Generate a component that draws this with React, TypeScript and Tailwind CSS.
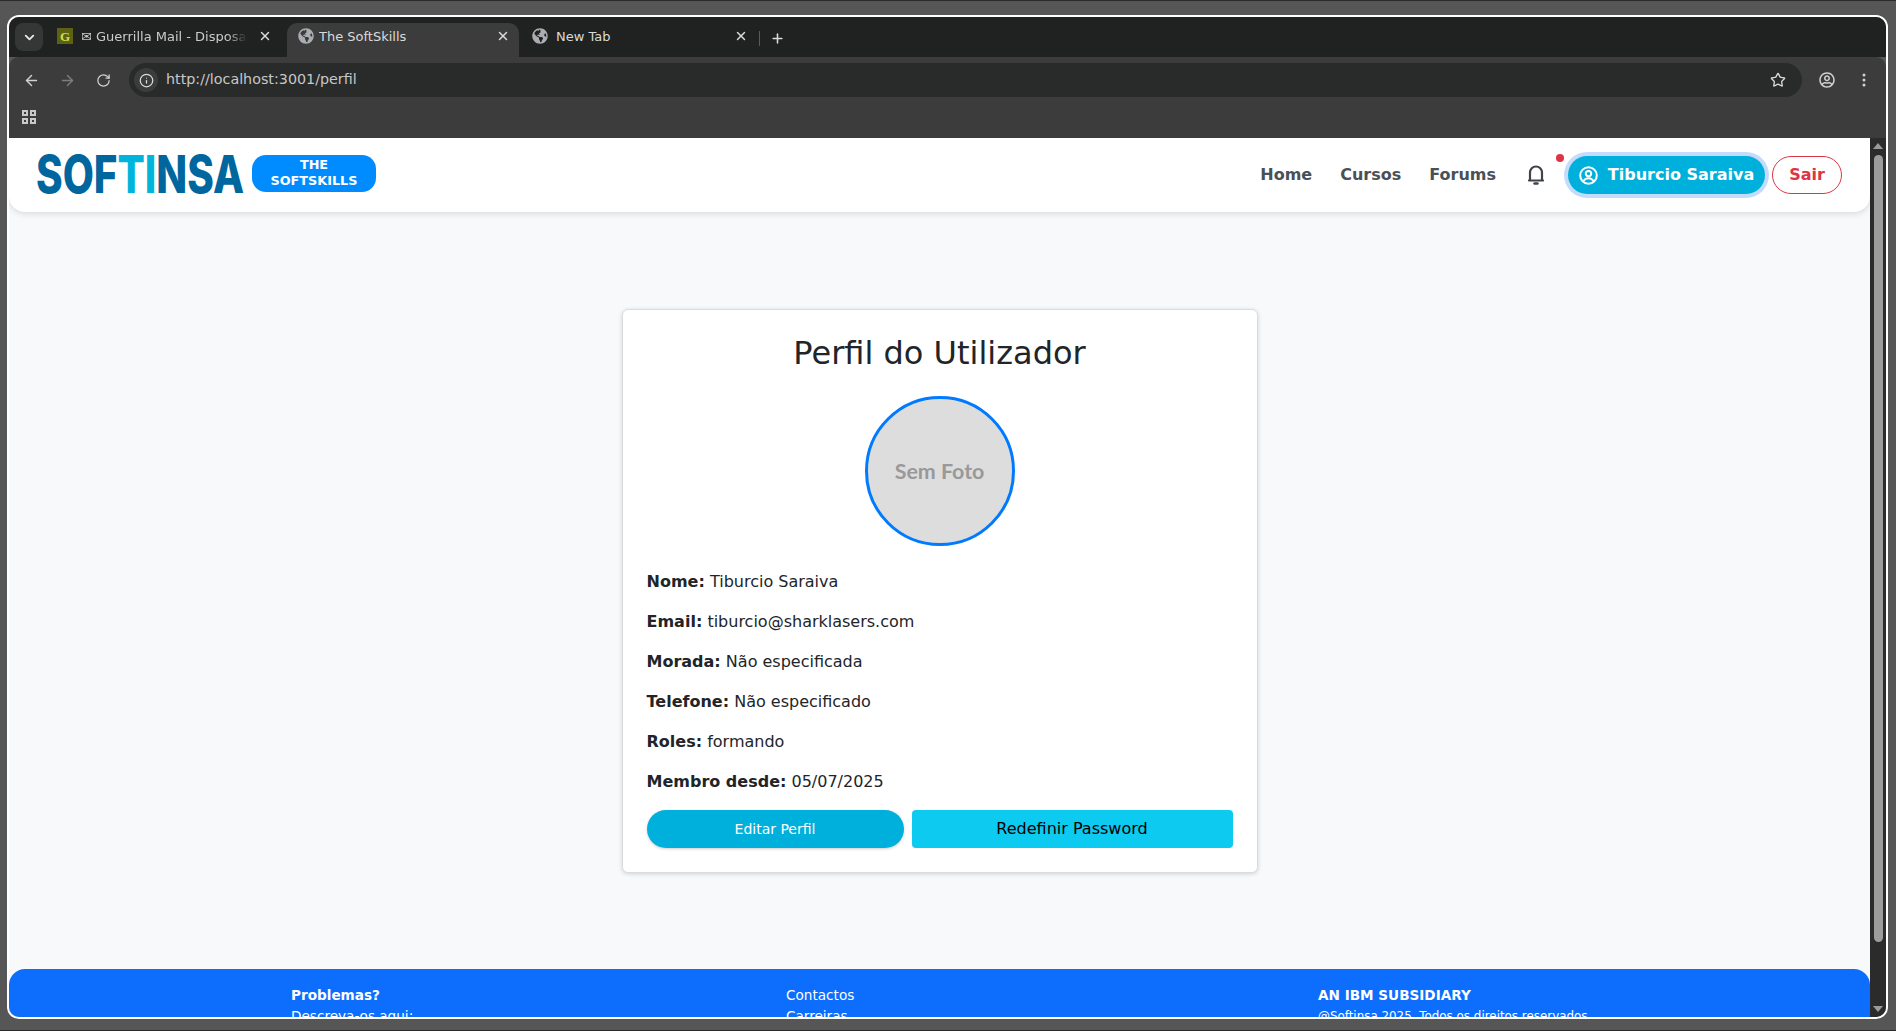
import { ArrowLeft, ArrowRight, ChevronDown, Info, Plus, RotateCw, Star, X } from "lucide-react";
import { BsThreeDotsVertical } from "react-icons/bs";
import { FaGlobeAmericas, FaRegUserCircle } from "react-icons/fa";

const ui = "font-['DejaVu_Sans',sans-serif]";

function Tab({ title, active, box, gap }: { title: string; active?: boolean; box: string; gap: string }) {
  return (
    <div
      className={`flex h-[34px] items-center rounded-t-[10px] pb-[8px] pl-[11px] ${box} ${
        active ? "bg-[#3c3c3c]" : ""
      }`}
    >
      <FaGlobeAmericas className="h-[16px] w-[16px] shrink-0 text-[#a9acb0]" />
      <span className={`${gap} flex-1 truncate text-[13px] leading-none text-[#d8dadb]`}>{title}</span>
      <X size={14} strokeWidth={2.5} className="shrink-0 text-[#d8dadb]" />
    </div>
  );
}

function BrowserChrome() {
  return (
    <div className={`${ui} shrink-0`}>
      <div className="flex h-[40px] items-end bg-[#202221] pl-[6px]">
        <div className="mb-[6px] flex h-[28px] w-[28px] items-center justify-center rounded-lg bg-[#353636]">
          <ChevronDown size={15} strokeWidth={3} className="text-[#e6e6e6]" />
        </div>
        <div className="flex h-[34px] w-[244px] items-center pb-[8px] pl-[14px] pr-[15px]">
          <div className="flex h-[16px] w-[16px] shrink-0 items-center justify-center bg-[#5c6113] font-['Liberation_Serif',serif] text-[13px] font-bold leading-none text-[#cfe04a]">
            G
          </div>
          <span className="ml-[8px] w-[166px] overflow-hidden whitespace-nowrap text-[13px] leading-none text-[#c9cbcc] [mask-image:linear-gradient(to_right,black_88%,transparent)]">
            ✉ Guerrilla Mail - Disposable Temporary
          </span>
          <X size={14} strokeWidth={2.5} className="ml-auto shrink-0 text-[#d8dadb]" />
        </div>
        <Tab title="The SoftSkills" active box="w-[232px] pr-[9px]" gap="ml-[5px]" />
        <div className="w-[2px]" />
        <Tab title="New Tab" box="w-[238px] pr-[11px]" gap="ml-[8px]" />
        <div className="mb-[11px] h-[15px] w-px bg-[#5a5a5a]" />
        <Plus size={15} strokeWidth={2.5} className="mb-[11px] ml-[10px] text-[#d8dadb]" />
      </div>
      <div className="rounded-t-[10px] bg-[#3c3c3c]">
        <div className="flex h-[46px] items-center pl-[14px] pr-[14px]">
          <ArrowLeft size={17} strokeWidth={2} className="text-[#cfd1d2]" />
          <ArrowRight size={17} strokeWidth={2} className="ml-[19px] text-[#7d7e7f]" />
          <RotateCw size={15} strokeWidth={2} className="ml-[20px] text-[#cfd1d2]" />
          <div className="ml-[18px] flex h-[34px] flex-1 items-center rounded-full bg-[#292a2a] pl-[5px] pr-[16px]">
            <div className="flex h-[24px] w-[24px] items-center justify-center rounded-full bg-[#3c3c3c]">
              <Info size={15} className="text-[#d8dadb]" />
            </div>
            <span className="ml-[8px] text-[14.3px] text-[#c6c8c9]">http://localhost:3001/perfil</span>
            <Star size={16} strokeWidth={2} className="ml-auto text-[#d8dadb]" />
          </div>
          <FaRegUserCircle className="ml-[17px] h-[16px] w-[16px] text-[#cfd1d2]" />
          <BsThreeDotsVertical className="ml-[21px] h-[16px] w-[16px] text-[#cfd1d2]" />
        </div>
        <div className="flex h-[35px] items-start pl-[13px] pt-[7px]">
          <div className="grid h-[14px] w-[14px] grid-cols-2 gap-[2px]">
            <span className="border-2 border-[#c8c8c8]" />
            <span className="border-2 border-[#c8c8c8]" />
            <span className="border-2 border-[#c8c8c8]" />
            <span className="border-2 border-[#c8c8c8]" />
          </div>
        </div>
      </div>
    </div>
  );
}

function Logo() {
  return (
    <svg width="208" height="40" viewBox="0 0 208 40" aria-label="Softinsa" className="overflow-visible">
      <text
        x="-1"
        y="38"
        textLength="208"
        lengthAdjust="spacingAndGlyphs"
        fontFamily="Inter, sans-serif"
        fontWeight="800"
        fontSize="52"
        fill="#00669e"
      >
        SOF
        <tspan fill="#00b4dc">TI</tspan>
        NSA
      </text>
    </svg>
  );
}

function BellIcon() {
  return (
    <svg width="18" height="21" viewBox="0 0 18 21" fill="none" stroke="#3f444a" strokeWidth="2.2" className="mb-[2px]">
      <path d="M3 15.5V8.5a6 6 0 0 1 12 0v7l1 1H2z" strokeLinejoin="round" />
      <path d="M7.5 19.5h3" strokeWidth="2.4" strokeLinecap="round" />
    </svg>
  );
}

function UserRingIcon() {
  return (
    <svg width="19" height="19" viewBox="0 0 19 19" fill="none" stroke="currentColor" strokeWidth="2">
      <circle cx="9.5" cy="9.5" r="8.3" />
      <circle cx="9.5" cy="7.6" r="2.7" />
      <path d="M4.6 15.2c1-2.2 2.8-3 4.9-3s3.900.8 4.900 3" />
    </svg>
  );
}

function Navbar() {
  return (
    <nav className="flex h-[74px] shrink-0 items-center rounded-b-2xl bg-white pl-[28px] pr-[28px] shadow-[0_2px_6px_rgba(0,0,0,0.12)]">
      <Logo />
      <div className="mb-[3px] ml-[7px] flex h-[37px] w-[124px] flex-col items-center justify-center rounded-[14px] bg-[#008cff] pb-[1px] text-center text-[12.8px] font-bold leading-[16px] text-white">
        <span>THE</span>
        <span>SOFTSKILLS</span>
      </div>
      <div className="ml-auto flex items-center text-[16px] font-bold text-[#495057]">
        <a>Home</a>
        <a className="ml-[28px]">Cursos</a>
        <a className="ml-[28px]">Forums</a>
        <div className="relative ml-[31px] mr-[23px] flex h-[38px] items-center">
          <BellIcon />
          <span className="absolute right-[-19px] top-[-2px] h-[8px] w-[8px] rounded-full bg-[#dc3545]" />
        </div>
        <button className="flex h-[38px] w-[197px] items-center justify-center gap-[10px] rounded-full bg-[#00b0dc] text-white ring-4 ring-[#c3dcfb]">
          <UserRingIcon />
          Tiburcio Saraiva
        </button>
        <button className="ml-[7px] h-[38px] w-[70px] rounded-full border border-[#dc3545] bg-white text-[#dc3545]">
          Sair
        </button>
      </div>
    </nav>
  );
}

function InfoRow({ label, value }: { label: string; value: string }) {
  return (
    <p className="mb-[16px] text-[16px] leading-[24px] text-[#212529]">
      <strong className="font-bold">{label}:</strong> {value}
    </p>
  );
}

function ProfileCard() {
  return (
    <section className="mx-auto w-[636px] rounded-md border border-[#dcdcdc] bg-white p-[24px] shadow-[0_1px_4px_rgba(0,0,0,0.16)]">
      <h1 className="text-center text-[32px] font-normal leading-[38px] text-[#212529]">Perfil do Utilizador</h1>
      <div className="mx-auto mb-[24px] mt-[24px] flex h-[150px] w-[150px] items-center justify-center rounded-full border-[3px] border-[#007bff] bg-[#dddddd] font-['Lato',sans-serif] text-[21.4px] font-bold text-[#999999]">
        Sem Foto
      </div>
      <InfoRow label="Nome" value="Tiburcio Saraiva" />
      <InfoRow label="Email" value="tiburcio@sharklasers.com" />
      <InfoRow label="Morada" value="Não especificada" />
      <InfoRow label="Telefone" value="Não especificado" />
      <InfoRow label="Roles" value="formando" />
      <InfoRow label="Membro desde" value="05/07/2025" />
      <div className="flex gap-[8px]">
        <button className="h-[38px] w-[257px] rounded-full bg-[#00b0dc] text-[14px] text-white shadow-[0_1px_3px_rgba(0,0,0,0.2)]">
          Editar Perfil
        </button>
        <button className="h-[38px] w-[321px] rounded-[4px] bg-[#0dcaf0] text-[16px] text-black">
          Redefinir Password
        </button>
      </div>
    </section>
  );
}

function Footer() {
  return (
    <footer className="grid shrink-0 grid-cols-[495px_532px_1fr] rounded-t-2xl bg-[#0d6efd] pb-[24px] pl-[282px] pt-[16px] text-[13.6px] leading-[21px] text-white">
      <div>
        <p className="font-bold">Problemas?</p>
        <p>Descreva-os aqui:</p>
      </div>
      <div>
        <p>Contactos</p>
        <p>Carreiras</p>
      </div>
      <div>
        <p className="font-bold">AN IBM SUBSIDIARY</p>
        <p className="text-[11.9px]">@Softinsa 2025. Todos os direitos reservados.</p>
      </div>
    </footer>
  );
}

function Scrollbar() {
  return (
    <div className="flex w-[16px] shrink-0 flex-col items-center bg-[#2b2b2b]">
      <span className="mt-[5px] h-0 w-0 border-x-[5px] border-b-[6px] border-x-transparent border-b-[#9a9a9a]" />
      <span className="mt-[6px] h-[787px] w-[9px] rounded-full bg-[#9c9c9c]" />
      <span className="mb-[5px] mt-auto h-0 w-0 border-x-[5px] border-t-[6px] border-x-transparent border-t-[#9a9a9a]" />
    </div>
  );
}

export default function App() {
  return (
    <div className="h-[1031px] w-[1896px] overflow-hidden border-y border-[#2a2a2a] bg-[#565656] pb-[11px] pl-[7px] pr-[8px] pt-[14px]">
      <div className="flex h-[1004px] flex-col overflow-hidden rounded-xl border-2 border-white">
        <BrowserChrome />
        <div className={`${ui} flex min-h-0 flex-1`}>
          <div className="flex min-w-0 flex-1 flex-col overflow-hidden bg-[#f8f9fa]">
            <Navbar />
            <main className="shrink-0 pb-[96px] pt-[97px]">
              <ProfileCard />
            </main>
            <Footer />
          </div>
          <Scrollbar />
        </div>
      </div>
    </div>
  );
}
